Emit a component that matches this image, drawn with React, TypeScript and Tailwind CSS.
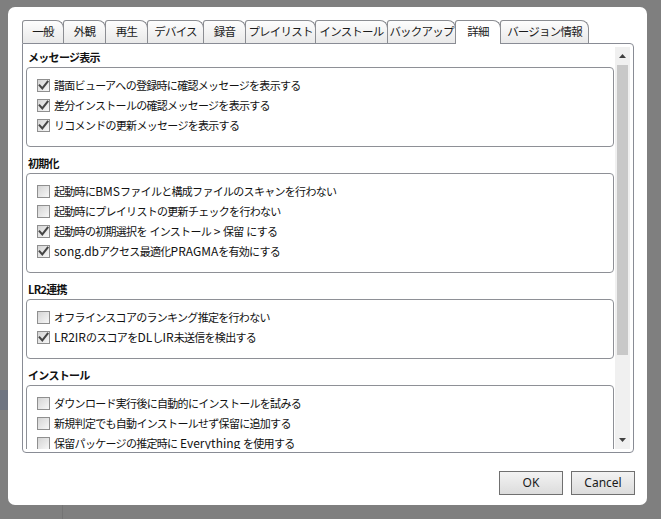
import React from "react";

type Item = [string, boolean];
const sections: { title: string; items: Item[] }[] = [
  {
    title: "メッセージ表示",
    items: [
      ["譜面ビューアへの登録時に確認メッセージを表示する", true],
      ["差分インストールの確認メッセージを表示する", true],
      ["リコメンドの更新メッセージを表示する", true],
    ],
  },
  {
    title: "初期化",
    items: [
      ["起動時にBMSファイルと構成ファイルのスキャンを行わない", false],
      ["起動時にプレイリストの更新チェックを行わない", false],
      ["起動時の初期選択を インストール > 保留 にする", true],
      ["song.dbアクセス最適化PRAGMAを有効にする", true],
    ],
  },
  {
    title: "LR2連携",
    items: [
      ["オフラインスコアのランキング推定を行わない", false],
      ["LR2IRのスコアをDLしIR未送信を検出する", true],
    ],
  },
  {
    title: "インストール",
    items: [
      ["ダウンロード実行後に自動的にインストールを試みる", false],
      ["新規判定でも自動インストールせず保留に追加する", false],
      ["保留パッケージの推定時に Everything を使用する", false],
    ],
  },
];

const tabs: [string, number][] = [
  ["一般", 42],
  ["外観", 43],
  ["再生", 43],
  ["デバイス", 57],
  ["録音", 43],
  ["プレイリスト", 71],
  ["インストール", 73],
  ["バックアップ", 69],
  ["詳細", 46],
  ["バージョン情報", 89],
];

const FONT = "font-['Meiryo_UI','Noto_Sans_CJK_JP',sans-serif]";

function Label({ text }: { text: string }) {
  const parts = text.split(/([\x20-\x7e]+)/).filter((p) => p.length > 0);
  return (
    <span className="text-[11px] tracking-[-0.7px] text-[#111] leading-none whitespace-nowrap">
      {parts.map((p, i) =>
        /^[\x20-\x7e]+$/.test(p) ? (
          <span key={i} className="text-[12px] tracking-[0px] whitespace-pre">
            {p}
          </span>
        ) : (
          <span key={i}>{p}</span>
        )
      )}
    </span>
  );
}

function Checkbox({ checked }: { checked: boolean }) {
  return (
    <div className="w-[13px] h-[13px] shrink-0 border border-[#8f8f8f] bg-gradient-to-br from-[#d4d4d4] to-[#f7f7f7] flex items-center justify-center">
      {checked && (
        <svg width="11" height="11" viewBox="0 0 11 11">
          <path d="M1.6 5.4 L4.3 8.4 L9.6 1.6" fill="none" stroke="#454545" strokeWidth="2" strokeLinecap="square" />
        </svg>
      )}
    </div>
  );
}

export default function App() {
  return (
    <div className={`w-[661px] h-[519px] bg-[#7f7f7f] overflow-hidden relative ${FONT}`}>
      <div className="absolute left-0 top-[390px] w-[8px] h-[20px] bg-[#6f7581]" />
      <div className="absolute left-[62px] top-[505px] w-px h-[14px] bg-[#747474]" />
      <div className="pl-[8px] pt-[7px]">
        <div className="w-[639px] h-[498px] bg-white rounded-[7px] pl-[14px] pr-[13px] pt-[13px] flex flex-col">
          {/* tabs */}
          <div className="flex h-[23px] items-end">
            {tabs.map(([t, w], i) => {
              const sel = t === "詳細";
              return (
                <div
                  key={t}
                  style={{ width: w }}
                  className={`${i > 0 ? "-ml-px" : ""} ${
                    sel
                      ? "bg-white h-[24px] -mb-px z-10 relative"
                      : "bg-gradient-to-b from-[#fdfdfd] to-[#e9e9e9] h-[23px]"
                  } border border-b-0 border-[#8b8d92] rounded-tl-[3px] rounded-tr-[8px] flex items-center justify-center text-[11.5px] tracking-[-0.8px] text-[#1b1b1b] leading-none pb-[1px]`}
                >
                  {t}
                </div>
              );
            })}
          </div>
          {/* panel */}
          <div className="w-[612px] h-[410px] border border-[#898c95] rounded-b-[4px] rounded-tr-[4px] pt-[3px] pb-[3px] pl-[3px] pr-[3px] flex gap-[1px]">
            <div className="flex-1 h-full overflow-hidden">
              {sections.map((s, si) => (
                <div key={s.title}>
                  <div
                    className={`${si === 0 ? "pt-[1px] h-[20px]" : "pt-[7px] h-[26px]"} pl-[2px] text-[11px] leading-[18px] font-bold tracking-[-0.7px] text-[#111]`}
                  >
                    {s.title}
                  </div>
                  <div className="border border-[#8e9096] rounded-[4px] pt-[7px] pb-[11px] pl-[10px]">
                    {s.items.map(([label, c]) => (
                      <div key={label} className="h-[20px] flex items-center gap-[4px]">
                        <Checkbox checked={c} />
                        <Label text={label} />
                      </div>
                    ))}
                  </div>
                </div>
              ))}
            </div>
            {/* scrollbar */}
            <div className="w-[15px] h-full bg-[#f0f0f0] flex flex-col">
              <div className="h-[18px] flex items-center justify-center">
                <svg width="7" height="4" viewBox="0 0 7 4">
                  <path d="M0 4 L3.5 0 L7 4 Z" fill="#404040" />
                </svg>
              </div>
              <div className="ml-[2px] w-[11px] h-[290px] bg-[#c8c8c8]" />
              <div className="flex-1" />
              <div className="h-[18px] flex items-center justify-center">
                <svg width="7" height="4" viewBox="0 0 7 4">
                  <path d="M0 0 L3.5 4 L7 0 Z" fill="#404040" />
                </svg>
              </div>
            </div>
          </div>
          {/* buttons */}
          <div className="flex justify-end gap-[8px] mt-[18px] -mr-[1px]">
            {["OK", "Cancel"].map((b) => (
              <div
                key={b}
                className="w-[64px] h-[24px] border border-[#707070] bg-gradient-to-b from-[#f3f3f3] to-[#dcdcdc] flex items-center justify-center text-[12px] text-[#1a1a1a] font-['Segoe_UI','Noto_Sans',sans-serif]"
              >
                {b}
              </div>
            ))}
          </div>
        </div>
      </div>
    </div>
  );
}
